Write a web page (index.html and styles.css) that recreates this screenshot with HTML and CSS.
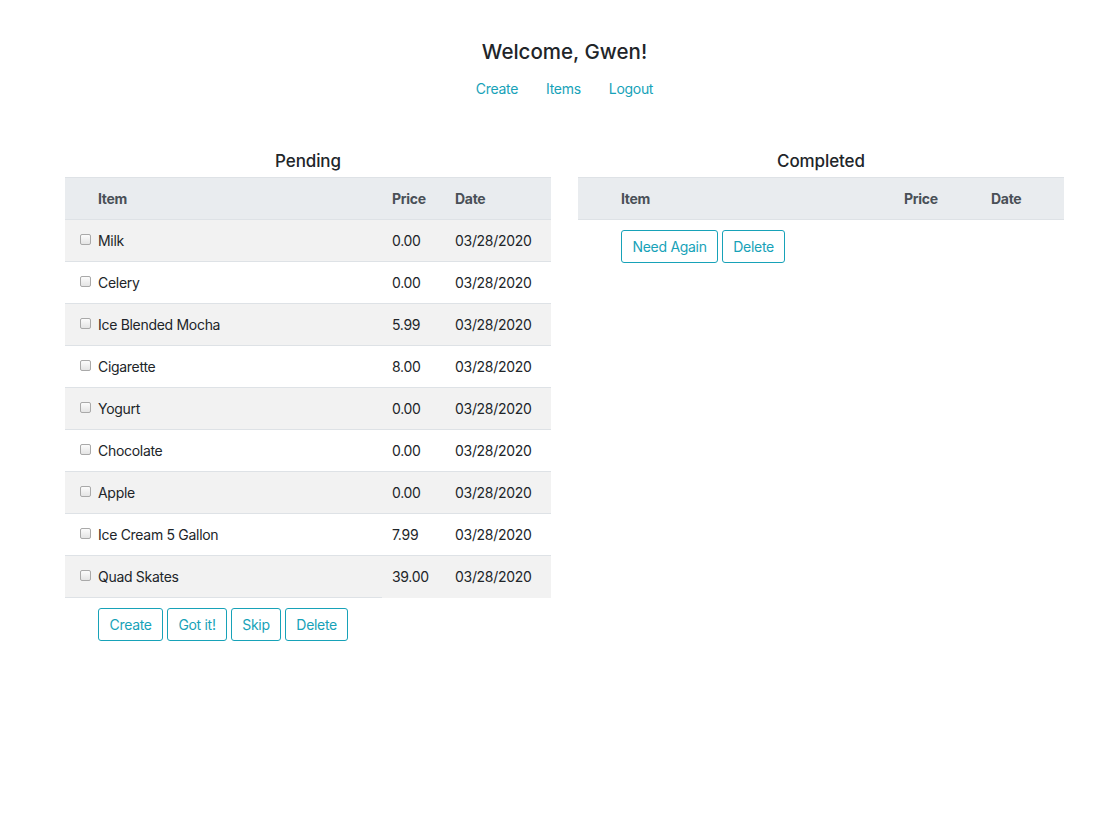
FILE: index.html
```html
<!DOCTYPE html>
<html>
<head>
<meta charset="utf-8">
<link rel="stylesheet" href="styles.css">
</head>
<body>
<div class="container">
  <h1 class="welcome">Welcome, Gwen!</h1>
  <nav class="nav">
    <a href="#" class="nav-link">Create</a>
    <a href="#" class="nav-link">Items</a>
    <a href="#" class="nav-link">Logout</a>
  </nav>
  <div class="columns">
    <section class="col">
      <h2 class="col-title">Pending</h2>
      <table class="tbl pending">
        <colgroup><col class="c1"><col class="c2"><col class="c3"><col class="c4"></colgroup>
        <thead>
          <tr><th></th><th>Item</th><th>Price</th><th>Date</th></tr>
        </thead>
        <tbody>
          <tr><td class="chk"><input type="checkbox" class="cb"></td><td>Milk</td><td>0.00</td><td>03/28/2020</td></tr>
          <tr><td class="chk"><input type="checkbox" class="cb"></td><td>Celery</td><td>0.00</td><td>03/28/2020</td></tr>
          <tr><td class="chk"><input type="checkbox" class="cb"></td><td>Ice Blended Mocha</td><td>5.99</td><td>03/28/2020</td></tr>
          <tr><td class="chk"><input type="checkbox" class="cb"></td><td>Cigarette</td><td>8.00</td><td>03/28/2020</td></tr>
          <tr><td class="chk"><input type="checkbox" class="cb"></td><td>Yogurt</td><td>0.00</td><td>03/28/2020</td></tr>
          <tr><td class="chk"><input type="checkbox" class="cb"></td><td>Chocolate</td><td>0.00</td><td>03/28/2020</td></tr>
          <tr><td class="chk"><input type="checkbox" class="cb"></td><td>Apple</td><td>0.00</td><td>03/28/2020</td></tr>
          <tr><td class="chk"><input type="checkbox" class="cb"></td><td>Ice Cream 5 Gallon</td><td>7.99</td><td>03/28/2020</td></tr>
          <tr><td class="chk"><input type="checkbox" class="cb"></td><td>Quad Skates</td><td>39.00</td><td>03/28/2020</td></tr>
        </tbody>
        <tfoot>
          <tr><td></td><td class="btns"><button class="btn">Create</button> <button class="btn">Got it!</button> <button class="btn">Skip</button> <button class="btn">Delete</button></td></tr>
        </tfoot>
      </table>
    </section>
    <section class="col">
      <h2 class="col-title">Completed</h2>
      <table class="tbl completed">
        <colgroup><col class="c1"><col class="c2"><col class="c3"><col class="c4"></colgroup>
        <thead>
          <tr><th></th><th>Item</th><th>Price</th><th>Date</th></tr>
        </thead>
        <tbody></tbody>
        <tfoot>
          <tr><td></td><td class="btns"><button class="btn">Need Again</button> <button class="btn">Delete</button></td></tr>
        </tfoot>
      </table>
    </section>
  </div>
</div>
</body>
</html>
```
FILE: styles.css
```css
* { box-sizing: border-box; }
body {
  margin: 0;
  font-family: Inter, "Liberation Sans", sans-serif;
  font-size: 14px;
  line-height: 21px;
  letter-spacing: -0.3px;
  color: #212529;
  background: #fff;
}
.container {
  width: 999px;
  margin-left: 65px;
}
.welcome {
  margin: 39px 0 0;
  font-size: 20.5px;
  line-height: 25px;
  font-weight: 500;
  letter-spacing: 0;
  text-align: center;
}
.nav {
  display: flex;
  justify-content: center;
  margin-top: 7px;
}
.nav-link {
  padding: 7px 14px;
  color: #17a2b8;
  text-decoration: none;
}
.columns {
  display: grid;
  grid-template-columns: 486px 486px;
  column-gap: 27px;
  margin-top: 45px;
}
.col-title {
  margin: 0 0 5px;
  font-size: 17px;
  line-height: 21px;
  font-weight: 500;
  letter-spacing: -0.1px;
  text-align: center;
}
.tbl {
  width: 100%;
  border-collapse: collapse;
  table-layout: fixed;
}
.tbl th, .tbl td {
  padding: 10px;
  line-height: 21px;
  text-align: left;
  vertical-align: top;
  border-top: 1px solid #dee2e6;
  white-space: nowrap;
}
.tbl thead th {
  background: #e9ecef;
  color: #495057;
  font-weight: 700;
  border-bottom: 1px solid #dee2e6;
}
.tbl tbody tr:nth-of-type(odd) { background: #f2f2f2; }
.pending .c1 { width: 23px; }
.pending .c3 { width: 63px; }
.pending .c4 { width: 106px; }
.completed .c1 { width: 33px; }
.completed .c3 { width: 87px; }
.completed .c4 { width: 83px; }
.tbl td.chk {
  padding-left: 15px;
  padding-right: 0;
  overflow: visible;
}
.cb {
  -webkit-appearance: none;
  appearance: none;
  display: block;
  width: 11px;
  height: 11px;
  margin: 4px 0 0;
  border: 1px solid #a9a9a9;
  border-radius: 2px;
  background: linear-gradient(#fcfcfc, #e4e4e4);
}
.tbl td.btns { padding-top: 10px; }
.btn {
  font-family: inherit;
  font-size: 14px;
  line-height: 21px;
  letter-spacing: -0.3px;
  padding: 5px 10.5px;
  color: #17a2b8;
  background: #fff;
  border: 1px solid #17a2b8;
  border-radius: 3px;
  margin: 0;
}
```
